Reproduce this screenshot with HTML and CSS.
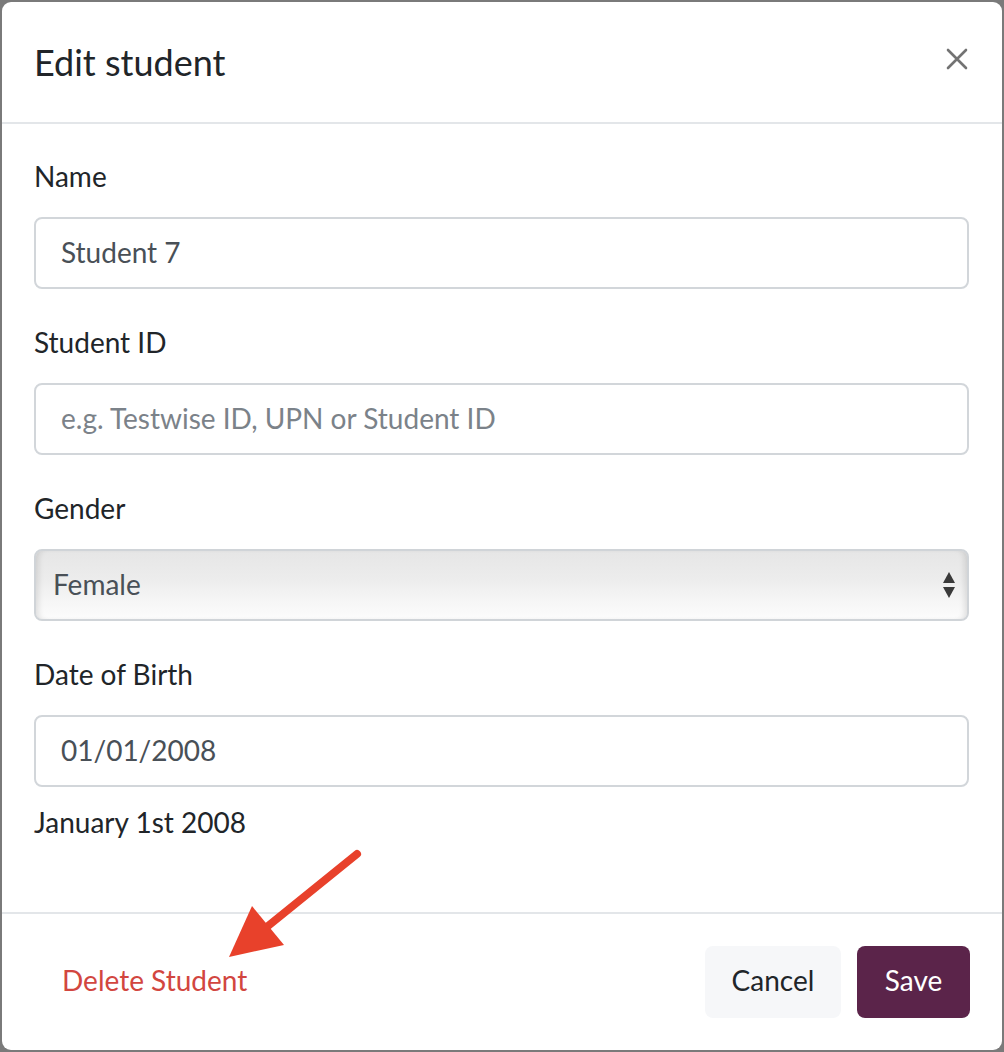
FILE: index.html
```html
<!DOCTYPE html>
<html lang="en">
<head>
<meta charset="utf-8">
<title>Edit student</title>
<link rel="stylesheet" href="styles.css">
</head>
<body>
<div class="modal">
  <div class="modal-header">
    <h5 class="modal-title">Edit student</h5>
    <button class="close" type="button" aria-label="Close">
      <svg width="22" height="22" viewBox="0 0 22 22"><path d="M2 2 L20 20 M20 2 L2 20" stroke="#737373" stroke-width="2.6" stroke-linecap="round"/></svg>
    </button>
  </div>
  <div class="modal-body">
    <div class="form-group">
      <label class="label">Name</label>
      <input class="form-control" type="text" value="Student 7">
    </div>
    <div class="form-group">
      <label class="label">Student ID</label>
      <input class="form-control" type="text" placeholder="e.g. Testwise ID, UPN or Student ID">
    </div>
    <div class="form-group">
      <label class="label">Gender</label>
      <div class="select-wrap">
        <select class="select">
          <option>Female</option>
          <option>Male</option>
        </select>
        <svg class="select-arrows" width="14" height="28" viewBox="0 0 14 28"><path d="M7 1 L13 12 L1 12 Z" fill="#3a3a3a"/><path d="M1 16 L13 16 L7 27 Z" fill="#3a3a3a"/></svg>
      </div>
    </div>
    <div class="form-group last">
      <label class="label">Date of Birth</label>
      <input class="form-control" type="text" value="01/01/2008">
      <div class="date-text">January 1st 2008</div>
    </div>
  </div>
  <div class="modal-footer">
    <button class="btn btn-link-danger" type="button">Delete Student</button>
    <div class="footer-actions">
      <button class="btn btn-light" type="button">Cancel</button>
      <button class="btn btn-primary" type="button">Save</button>
    </div>
  </div>
</div>
<svg class="annotation" width="1004" height="1052" viewBox="0 0 1004 1052">
  <line x1="357" y1="854" x2="268" y2="926" stroke="#e8412b" stroke-width="8" stroke-linecap="round"/>
  <polygon points="252,906 284,945 229,957" fill="#e8412b"/>
</svg>
</body>
</html>
```
FILE: styles.css
```css
html, body {
  margin: 0;
  padding: 0;
}
body {
  width: 1004px;
  height: 1052px;
  background: #7a7a7a;
  font-family: Lato, "Open Sans", sans-serif;
  color: #212529;
  position: relative;
  overflow: hidden;
}
.modal {
  margin: 2px;
  width: 1000px;
  height: 1048px;
  background: #fff;
  border-radius: 9px;
  display: flex;
  flex-direction: column;
  box-sizing: border-box;
}
.modal-header {
  height: 120px;
  border-bottom: 2px solid #e3e6e9;
  display: flex;
  align-items: center;
  justify-content: space-between;
  padding: 0 34px 0 32px;
  box-sizing: content-box;
}
.modal-title {
  margin: 0;
  font-size: 36px;
  font-weight: 400;
  line-height: 1.2;
  color: #212529;
  position: relative;
  top: 1px;
}
.close {
  background: none;
  border: 0;
  padding: 0;
  margin: 0;
  width: 22px;
  height: 22px;
  display: flex;
  cursor: pointer;
  position: relative;
  top: -3px;
}
.modal-body {
  flex: 1;
  padding: 31px 33px 0 32px;
}
.form-group {
  margin-bottom: 32px;
}
.form-group.last {
  margin-bottom: 0;
}
.label {
  display: block;
  font-size: 28px;
  line-height: 42px;
  margin-bottom: 20px;
  color: #212529;
}
.form-control {
  display: block;
  width: 100%;
  height: 72px;
  box-sizing: border-box;
  border: 2px solid #d2d6da;
  border-radius: 8px;
  padding: 0 24px 3px 25px;
  font-family: inherit;
  font-size: 28px;
  color: #495057;
  background: #fff;
  outline: none;
}
.form-control::placeholder {
  color: #7b8289;
  opacity: 1;
}
.select-wrap {
  position: relative;
}
.select {
  display: block;
  width: 100%;
  height: 72px;
  box-sizing: border-box;
  -webkit-appearance: none;
  appearance: none;
  border: 2px solid #d0d4d8;
  border-radius: 8px;
  padding: 0 16px 3px 17px;
  font-family: inherit;
  font-size: 28px;
  color: #495057;
  background: linear-gradient(to bottom, #e6e6e6 0%, #ececec 40%, #f6f6f6 75%, #fcfcfc 100%);
  box-shadow: inset 6px 0 6px -4px rgba(0,0,0,0.12), inset -6px 0 6px -4px rgba(0,0,0,0.12);
  outline: none;
}
.select-arrows {
  position: absolute;
  right: 13px;
  top: 22px;
  pointer-events: none;
}
.date-text {
  margin-top: 14px;
  font-size: 28px;
  line-height: 42px;
  color: #212529;
}
.modal-footer {
  border-top: 2px solid #e3e6e9;
  height: 138px;
  box-sizing: border-box;
  display: flex;
  align-items: center;
  justify-content: space-between;
  padding: 0 32px 0 33px;
}
.footer-actions {
  display: flex;
  gap: 16px;
}
.btn {
  font-family: inherit;
  font-size: 28px;
  height: 72px;
  border: 0;
  border-radius: 8px;
  padding: 0 26px 5px;
  cursor: pointer;
  line-height: 42px;
}
.btn-link-danger {
  background: none;
  color: #d2463f;
  padding: 0 27px 5px;
}
.btn-light {
  background: #f6f7f9;
  color: #212529;
  width: 136px;
}
.btn-primary {
  background: #5b244a;
  color: #fff;
  width: 113px;
}
.annotation {
  position: absolute;
  left: 0;
  top: 0;
  pointer-events: none;
}
```
